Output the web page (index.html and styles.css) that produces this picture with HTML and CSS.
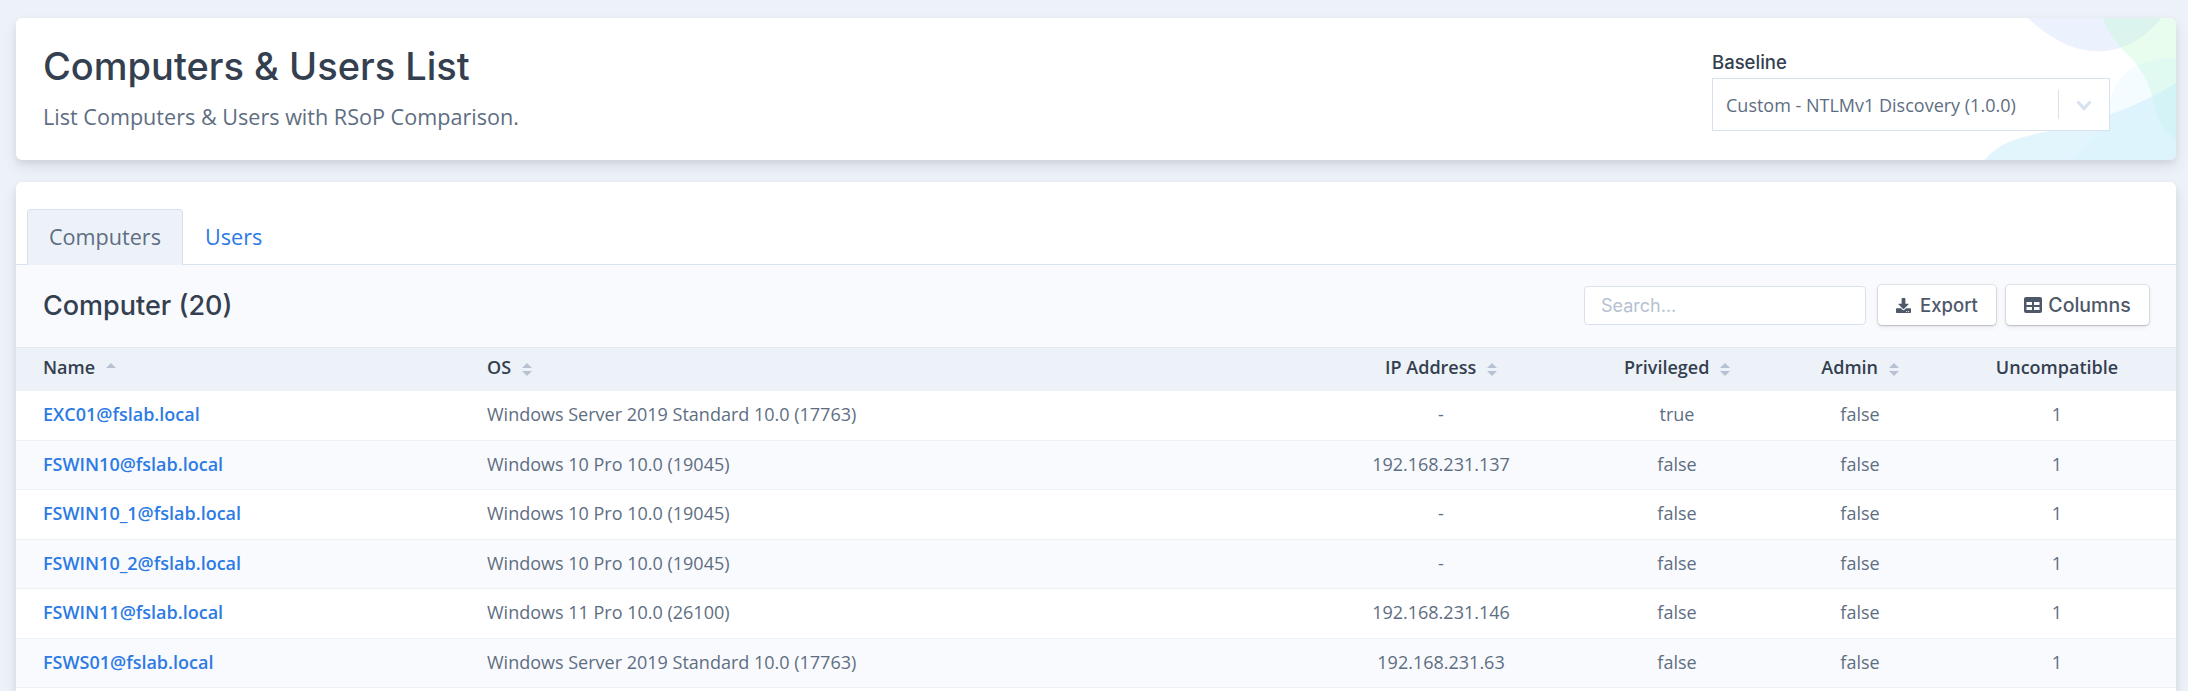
FILE: index.html
```html
<!DOCTYPE html>
<html lang="en">

<head>
  <meta charset="UTF-8">
  <meta name="viewport" content="width=device-width, initial-scale=1.0">
  <title>Computers &amp; Users List</title>
  <link rel="stylesheet" href="styles.css">
</head>

<body>
  <div class="card page-header">
    <svg class="corner" viewBox="0 0 600 426" preserveAspectRatio="none" aria-hidden="true">
      <path class="blob-blue" d="M155 0C210 50 280 100 365 100C440 100 510 60 555 0Z" />
      <path class="blob-green" d="M380 0C395 40 420 75 450 105C500 150 525 210 535 260C545 310 565 340 600 365V0Z" />
      <path class="blob-light" d="M285 426C330 385 385 330 405 240C420 170 490 115 600 120V426Z" />
      <path class="blob-sky" d="M25 426C70 370 140 355 220 340C330 320 480 270 600 195V426Z" />
    </svg>
    <div class="page-title">
      <h1>Computers &amp; Users List</h1>
      <p>List Computers &amp; Users with RSoP Comparison.</p>
    </div>
    <div class="baseline">
      <label>Baseline</label>
      <div class="select">
        <span class="select-value">Custom - NTLMv1 Discovery (1.0.0)</span>
        <span class="select-arrow">
          <svg viewBox="0 0 20 20" width="20" height="20" aria-hidden="true">
            <path d="M4.500 5.500 10 11l5.500-5.500 2 2L10 16 2.500 7.500z" />
          </svg>
        </span>
      </div>
    </div>
  </div>

  <div class="card list-card">
    <div class="tabs">
      <a class="tab active">Computers</a>
      <a class="tab">Users</a>
    </div>

    <div class="toolbar">
      <h2>Computer (20)</h2>
      <div class="tools">
        <input class="search" type="text" placeholder="Search...">
        <button class="btn btn-export">
          <svg viewBox="0 0 512 512" width="15" height="15" aria-hidden="true">
            <path d="M216 0h80c13.300 0 24 10.700 24 24v168h87.700c17.800 0 26.700 21.500 14.100 34.100L269.700 378.300c-7.500 7.500-19.800 7.500-27.300 0L90.100 226.100c-12.600-12.600-3.700-34.100 14.100-34.100H192V24c0-13.300 10.700-24 24-24zm296 376v112c0 13.300-10.700 24-24 24H24c-13.300 0-24-10.700-24-24V376c0-13.300 10.700-24 24-24h146.700l49 49c20.100 20.100 52.500 20.100 72.600 0l49-49H488c13.300 0 24 10.700 24 24zm-124 88c0-11-9-20-20-20s-20 9-20 20 9 20 20 20 20-9 20-20zm64 0c0-11-9-20-20-20s-20 9-20 20 9 20 20 20 20-9 20-20z" />
          </svg>
          Export
        </button>
        <button class="btn btn-columns">
          <svg viewBox="0 0 18 16" width="18" height="16" aria-hidden="true">
            <path fill-rule="evenodd" d="M2 0h14a2 2 0 0 1 2 2v12a2 2 0 0 1-2 2H2a2 2 0 0 1-2-2V2a2 2 0 0 1 2-2zM2.500 5v3h5.500V5zM10 5v3h5.500V5zM2.500 10v3h5.500v-3zM10 10v3h5.500v-3z" />
          </svg>
          Columns
        </button>
      </div>
    </div>

    <table class="list">
      <colgroup>
        <col class="col-name">
        <col class="col-os">
        <col class="col-ip">
        <col class="col-priv">
        <col class="col-admin">
        <col class="col-uncomp">
      </colgroup>
      <thead>
        <tr>
          <th class="first">Name <span class="sort only-up"></span></th>
          <th class="left">OS <span class="sort"></span></th>
          <th>IP Address <span class="sort"></span></th>
          <th>Privileged <span class="sort"></span></th>
          <th>Admin <span class="sort"></span></th>
          <th>Uncompatible</th>
        </tr>
      </thead>
      <tbody>
        <tr>
          <td class="first"><a>EXC01@fslab.local</a></td>
          <td class="left">Windows Server 2019 Standard 10.0 (17763)</td>
          <td>-</td>
          <td>true</td>
          <td>false</td>
          <td>1</td>
        </tr>
        <tr>
          <td class="first"><a>FSWIN10@fslab.local</a></td>
          <td class="left">Windows 10 Pro 10.0 (19045)</td>
          <td>192.168.231.137</td>
          <td>false</td>
          <td>false</td>
          <td>1</td>
        </tr>
        <tr>
          <td class="first"><a>FSWIN10_1@fslab.local</a></td>
          <td class="left">Windows 10 Pro 10.0 (19045)</td>
          <td>-</td>
          <td>false</td>
          <td>false</td>
          <td>1</td>
        </tr>
        <tr>
          <td class="first"><a>FSWIN10_2@fslab.local</a></td>
          <td class="left">Windows 10 Pro 10.0 (19045)</td>
          <td>-</td>
          <td>false</td>
          <td>false</td>
          <td>1</td>
        </tr>
        <tr>
          <td class="first"><a>FSWIN11@fslab.local</a></td>
          <td class="left">Windows 11 Pro 10.0 (26100)</td>
          <td>192.168.231.146</td>
          <td>false</td>
          <td>false</td>
          <td>1</td>
        </tr>
        <tr>
          <td class="first"><a>FSWS01@fslab.local</a></td>
          <td class="left">Windows Server 2019 Standard 10.0 (17763)</td>
          <td>192.168.231.63</td>
          <td>false</td>
          <td>false</td>
          <td>1</td>
        </tr>
      </tbody>
    </table>
  </div>
</body>

</html>
```

FILE: styles.css
```css
html,
body {
  height: 691px;
  overflow: hidden;
}

body {
  margin: 0;
  padding: 18px 12px 0 16px;
  box-sizing: border-box;
  background-color: #edf2f9;
  color: #5e6e82;
  font-family: "Open Sans", "Liberation Sans", sans-serif;
  font-size: 18px;
}

h1,
h2,
p {
  margin: 0;
}

.card {
  position: relative;
  border-radius: 6px;
  background-color: #fff;
  box-shadow: 0 7px 14px 0 rgba(65, 69, 88, 0.1), 0 3px 6px 0 rgba(0, 0, 0, 0.07);
  overflow: hidden;
}

/* header card */

.page-header {
  display: flex;
  justify-content: space-between;
  height: 142px;
  padding: 0 66px 0 27px;
  box-sizing: border-box;
}

.corner {
  position: absolute;
  top: 0;
  right: 0;
  width: 200px;
  height: 142px;
}

.blob-blue {
  fill: #ebf2fd;
}

.blob-green {
  fill: #bdf9ce;
  opacity: 0.35;
}

.blob-light {
  fill: #c8eeff;
  opacity: 0.2;
}

.blob-sky {
  fill: #c5ebfb;
  opacity: 0.5;
}

.page-title h1 {
  margin-top: 25px;
  color: #344050;
  font-family: Inter, "Open Sans", sans-serif;
  font-size: 38px;
  font-weight: 500;
  line-height: 46px;
}

.page-title p {
  margin-top: 14px;
  font-size: 21.6px;
  line-height: 28px;
}

.baseline {
  position: relative;
  width: 398px;
  padding-top: 33px;
}

.baseline label {
  display: block;
  height: 27px;
  color: #344050;
  font-family: Inter, "Open Sans", sans-serif;
  font-size: 18.5px;
  font-weight: 500;
  line-height: 22px;
}

.select {
  display: flex;
  align-items: center;
  height: 53px;
  box-sizing: border-box;
  border: 1px solid #d8e2ef;
  background-color: #fff;
}

.select-value {
  flex: 1;
  padding-left: 13px;
}

.select-arrow {
  display: flex;
  justify-content: center;
  width: 50px;
  height: 29px;
  align-items: center;
  border-left: 1px solid #d8e2ef;
}

.select-arrow svg {
  fill: #d8e2ef;
}

/* list card */

.list-card {
  height: 509px;
  box-sizing: border-box;
  margin-top: 22px;
  padding-top: 27px;
  border-radius: 6px 6px 0 0;
}

.tabs {
  display: flex;
  height: 56px;
  box-sizing: border-box;
  padding-left: 11px;
  border-bottom: 1px solid #d8e2ef;
}

.tab {
  height: 56px;
  box-sizing: border-box;
  padding: 0 21px;
  border: 1px solid transparent;
  border-radius: 4px 4px 0 0;
  color: #2c7be5;
  font-size: 21.6px;
  line-height: 54px;
}

.tab.active {
  border-color: #d8e2ef;
  border-bottom-color: #edf2f9;
  background-color: #edf2f9;
  color: #5e6e82;
}

.toolbar {
  display: flex;
  justify-content: space-between;
  align-items: center;
  height: 82px;
  box-sizing: border-box;
  padding: 0 27px 2px;
  background-color: #f9fafd;
}

.toolbar h2 {
  color: #344050;
  font-family: Inter, "Open Sans", sans-serif;
  font-size: 27px;
  font-weight: 500;
}

.tools {
  display: flex;
  align-items: center;
  gap: 10px;
}

.search {
  width: 282px;
  height: 39px;
  box-sizing: border-box;
  margin-right: 2px;
  padding: 0 16px;
  border: 1px solid #d8e2ef;
  border-radius: 4px;
  outline: none;
  background-color: #fff;
  font-family: Inter, "Open Sans", sans-serif;
  font-size: 18px;
}

.search::placeholder {
  color: #b6c1d2;
}

.btn {
  display: flex;
  justify-content: center;
  align-items: center;
  gap: 6px;
  height: 40px;
  border: 0;
  border-radius: 4px;
  background-color: #fff;
  box-shadow: 0 0 0 1px rgba(43, 45, 80, 0.1), 0 2px 5px 0 rgba(43, 45, 80, 0.08), 0 1px 1.5px 0 rgba(0, 0, 0, 0.07), 0 1px 2px 0 rgba(0, 0, 0, 0.08);
  color: #4d5969;
  font-family: Inter, "Open Sans", sans-serif;
  font-size: 18.5px;
  font-weight: 500;
}

.btn svg {
  fill: #4d5969;
}

.btn-export {
  width: 118px;
  gap: 9px;
}

.btn-columns {
  width: 143px;
  font-size: 19.5px;
}

/* table */

.list {
  width: 100%;
  border-collapse: collapse;
  table-layout: fixed;
}

.col-name {
  width: 455px;
}

.col-os {
  width: 839px;
}

.col-ip {
  width: 262px;
}

.col-priv {
  width: 210px;
}

.col-admin {
  width: 156px;
}

.list th,
.list td {
  padding: 0 16px;
  text-align: center;
}

.list .first {
  padding-left: 27px;
  text-align: left;
}

.list .left {
  text-align: left;
}

.list th {
  height: 43px;
  box-sizing: border-box;
  padding-bottom: 4px;
  border-top: 1px solid #e3e9f2;
  background-color: #edf2f9;
  color: #344050;
  font-weight: 600;
}

.list td {
  height: 49.5px;
  box-sizing: border-box;
  padding-bottom: 2px;
  border-bottom: 1px solid #edf2f9;
}

.list tbody tr:nth-child(even) {
  background-color: #f9fafd;
}

.list a {
  color: #2c7be5;
  font-weight: 600;
}

/* sort carets */

.sort {
  position: relative;
  display: inline-block;
  width: 10px;
  height: 13px;
  margin-left: 6px;
  vertical-align: -2px;
}

.sort::before,
.sort::after {
  content: "";
  position: absolute;
  left: 0;
  border-right: 5px solid transparent;
  border-left: 5px solid transparent;
}

.sort::before {
  top: 0;
  border-bottom: 5px solid #b6c1d2;
}

.sort::after {
  bottom: 0;
  border-top: 5px solid #b6c1d2;
}

.sort.only-up::after {
  display: none;
}
```
